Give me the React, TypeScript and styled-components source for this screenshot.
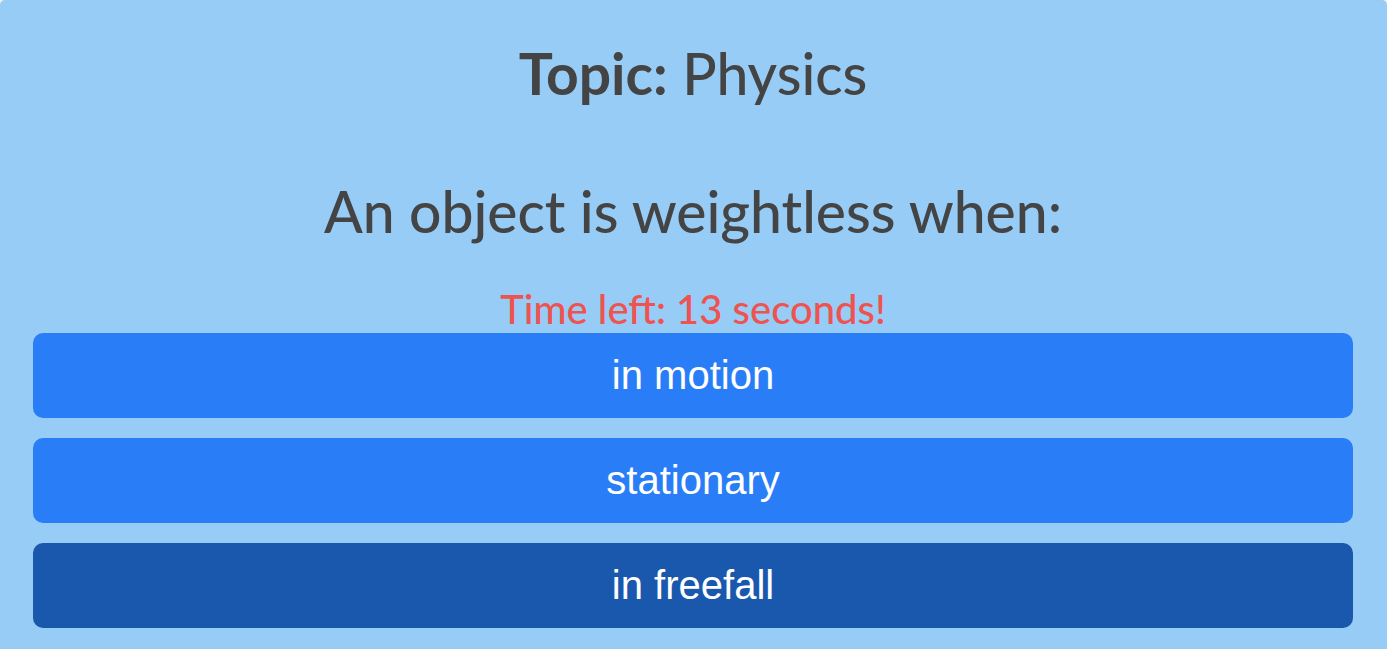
import React from "react";
import styled, { createGlobalStyle } from "styled-components";

const GlobalStyle = createGlobalStyle`
  *, *::before, *::after { box-sizing: border-box; }
  body { margin: 0; background: #f4f1ec; }
`;

const Card = styled.main`
  display: flex;
  flex-direction: column;
  min-height: 100vh;
  padding: 38px 34px 21px 33px;
  border-radius: 5px 5px 0 0;
  background: #96ccf6;
  color: #444444;
  font-family: Lato, sans-serif;
  font-weight: 500;
  text-align: center;
`;

const Heading = styled.h1`
  margin: 0 0 68px;
  font-size: 57px;
  font-weight: 500;
  line-height: 70px;
`;

const Question = styled.h2`
  margin: 0 0 40px;
  font-size: 57px;
  font-weight: 500;
  line-height: 70px;
`;

const Topic = styled.strong`
  font-weight: 700;
`;

const Timer = styled.p`
  margin: 0;
  color: #ef5350;
  font-size: 40px;
  line-height: 47px;
`;

const Answers = styled.div`
  display: flex;
  flex-direction: column;
  gap: 20px;
`;

const Answer = styled.button<{ $active?: boolean }>`
  width: 100%;
  padding: 18px 20px;
  border: 0;
  border-radius: 10px;
  background: ${({ $active }) => ($active ? "#1a58ad" : "#297ef8")};
  color: #ffffff;
  font-family: "Liberation Sans", Arial, sans-serif;
  font-size: 40px;
  line-height: 49px;
  cursor: pointer;
`;

const answers = ["in motion", "stationary", "in freefall"];

export default function App() {
  return (
    <>
      <GlobalStyle />
      <Card>
        <Heading>
          <Topic>Topic:</Topic> Physics
        </Heading>
        <Question>An object is weightless when:</Question>
        <Timer>Time left: 13 seconds!</Timer>
        <Answers>
          {answers.map((answer) => (
            <Answer key={answer} type="button" $active={answer === "in freefall"}>
              {answer}
            </Answer>
          ))}
        </Answers>
      </Card>
    </>
  );
}
